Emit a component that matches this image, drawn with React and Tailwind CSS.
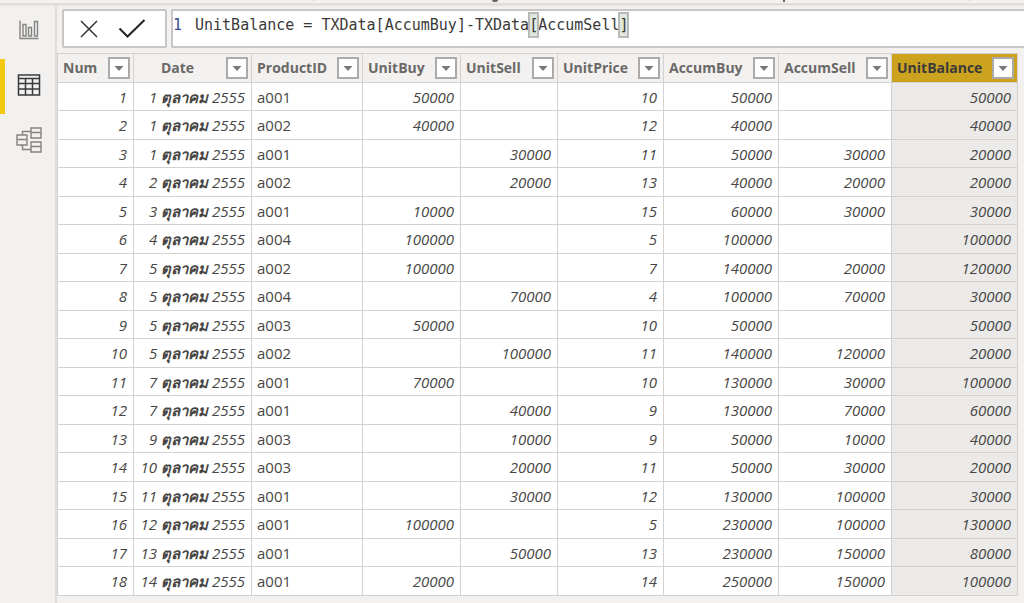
const columns = [
  { name: 'Num', width: 'w-[76px]', align: 'right' },
  { name: 'Date', width: 'w-[118px]', align: 'right', center: true },
  { name: 'ProductID', width: 'w-[111px]', align: 'left' },
  { name: 'UnitBuy', width: 'w-[98px]', align: 'right' },
  { name: 'UnitSell', width: 'w-[97px]', align: 'right' },
  { name: 'UnitPrice', width: 'w-[106px]', align: 'right' },
  { name: 'AccumBuy', width: 'w-[115px]', align: 'right' },
  { name: 'AccumSell', width: 'w-[113px]', align: 'right' },
  { name: 'UnitBalance', width: 'w-[126px]', align: 'right', selected: true },
];

const rows = [
  [1, '1 ตุลาคม 2555', 'a001', 50000, '', 10, 50000, '', 50000],
  [2, '1 ตุลาคม 2555', 'a002', 40000, '', 12, 40000, '', 40000],
  [3, '1 ตุลาคม 2555', 'a001', '', 30000, 11, 50000, 30000, 20000],
  [4, '2 ตุลาคม 2555', 'a002', '', 20000, 13, 40000, 20000, 20000],
  [5, '3 ตุลาคม 2555', 'a001', 10000, '', 15, 60000, 30000, 30000],
  [6, '4 ตุลาคม 2555', 'a004', 100000, '', 5, 100000, '', 100000],
  [7, '5 ตุลาคม 2555', 'a002', 100000, '', 7, 140000, 20000, 120000],
  [8, '5 ตุลาคม 2555', 'a004', '', 70000, 4, 100000, 70000, 30000],
  [9, '5 ตุลาคม 2555', 'a003', 50000, '', 10, 50000, '', 50000],
  [10, '5 ตุลาคม 2555', 'a002', '', 100000, 11, 140000, 120000, 20000],
  [11, '7 ตุลาคม 2555', 'a001', 70000, '', 10, 130000, 30000, 100000],
  [12, '7 ตุลาคม 2555', 'a001', '', 40000, 9, 130000, 70000, 60000],
  [13, '9 ตุลาคม 2555', 'a003', '', 10000, 9, 50000, 10000, 40000],
  [14, '10 ตุลาคม 2555', 'a003', '', 20000, 11, 50000, 30000, 20000],
  [15, '11 ตุลาคม 2555', 'a001', '', 30000, 12, 130000, 100000, 30000],
  [16, '12 ตุลาคม 2555', 'a001', 100000, '', 5, 230000, 100000, 130000],
  [17, '13 ตุลาคม 2555', 'a001', '', 50000, 13, 230000, 150000, 80000],
  [18, '14 ตุลาคม 2555', 'a001', 20000, '', 14, 250000, 150000, 100000],
];

function ReportIcon() {
  return (
    <svg width="20" height="20" viewBox="0 0 20 20" fill="none" stroke="#858381" strokeWidth="1.4">
      <path d="M1 0.5V18.500H19.500" />
      <path d="M4 4.500H7V16H4ZM9.500 7.500H12.500V16H9.500ZM15.500 1.500H18.500V16H15.500Z" />
    </svg>
  );
}

function DataIcon() {
  return (
    <svg width="24" height="22" viewBox="0 0 24 22" fill="none" stroke="#3b3a39" strokeWidth="1.5">
      <path d="M1.500 1H22.500V21H1.500ZM1.500 4.500H22.500M1.500 9.500H22.500M1.500 15H22.500M8.500 4.500V21M15.500 4.500V21" />
    </svg>
  );
}

function ModelIcon() {
  return (
    <svg width="26" height="26" viewBox="0 0 26 26" fill="none" stroke="#858381" strokeWidth="1.4">
      <path d="M1 8H11V18H1ZM1 12.500H11M15 1H25V11H15ZM15 5.500H25M15 15H25V25H15ZM15 19.500H25" />
      <path d="M6.500 8V4.500H15M6.500 18V22.500H15" />
    </svg>
  );
}

function ViewButton({ label, active, children }) {
  return (
    <button
      aria-label={label}
      className={`flex h-[55px] w-full items-center justify-center border-l-[5px] pr-[3px] pb-[3px] ${
        active ? 'border-[#f2c811]' : 'border-transparent'
      }`}
    >
      {children}
    </button>
  );
}

function HeaderCell({ column }) {
  return (
    <th
      scope="col"
      className={`border border-[#d4d2d0] p-0 pr-[3px] pl-[5px] font-bold ${
        column.selected ? 'bg-[#cba31f] text-[#3b3a39]' : 'text-[#6b6967]'
      }`}
    >
      <div className="flex items-center justify-between">
        <span className={column.center ? 'flex-1 pr-2.5 text-center' : ''}>{column.name}</span>
        <button
          aria-label={`Filter ${column.name}`}
          className="flex size-[22px] shrink-0 items-center justify-center border-2 border-[#adabaa] bg-white"
        >
          <svg width="10" height="5" viewBox="0 0 10 5" fill="#7a7876">
            <path d="M0.500 0H9.500L5 5Z" />
          </svg>
        </button>
      </div>
    </th>
  );
}

function DateText({ value }) {
  const [day, month, year] = value.split(' ');
  return (
    <>
      {day} <span className="font-semibold">{month}</span> {year}
    </>
  );
}

export default function App() {
  return (
    <div className="min-h-screen bg-[#f2f1f0] font-['Open_Sans','Noto_Sans',sans-serif]">
      {/* bottom edge of the ribbon */}
      <div className="shadow-sm">
        <div aria-hidden className="flex h-1 items-start border-b border-[#e2e0df]">
          <span className="ml-[313px] h-px w-px bg-[#c8c6c4]" />
          <span className="ml-[178px] h-[2px] w-[6px] rounded-b-full bg-[#6b6967]" />
          <span className="ml-[285px] h-[2px] w-[2px] bg-[#6b6967]" />
          <span className="mr-[54px] ml-auto h-px w-px bg-[#c8c6c4]" />
        </div>
      </div>

      <div className="flex min-h-[599px]">
        <nav className="w-[57px] shrink-0 border-r-2 border-[#e0dedd]">
          <ViewButton label="Report">
            <ReportIcon />
          </ViewButton>
          <ViewButton label="Data" active>
            <DataIcon />
          </ViewButton>
          <ViewButton label="Model">
            <ModelIcon />
          </ViewButton>
        </nav>

        <main className="min-w-0 flex-1">
          <div className="flex gap-1 pt-[5px] pl-[5px]">
            <div className="flex h-[39px] w-[105px] shrink-0 items-center justify-center gap-5 rounded-xs border-2 border-[#c8c6c4] bg-white pr-1">
              <button aria-label="Cancel">
                <svg width="18" height="18" viewBox="0 0 18 18" fill="none" stroke="#323130" strokeWidth="1.5">
                  <path d="M1 1L17 17M17 1L1 17" />
                </svg>
              </button>
              <button aria-label="Commit">
                <svg width="28" height="20" viewBox="0 0 28 20" fill="none" stroke="#252423" strokeWidth="2">
                  <path d="M1.500 9.500L9.500 17.500L26.500 1" />
                </svg>
              </button>
            </div>
            <div className="flex h-[39px] min-w-0 flex-1 items-start rounded-l-xs border-2 border-r-0 border-[#c8c6c4] bg-white pt-[2px] font-['DejaVu_Sans_Mono',monospace] text-[15px] leading-6 whitespace-pre text-[#3b3a39]">
              <span className="w-[22px] text-[#3b4a94]">1</span>
              <code className="font-['DejaVu_Sans_Mono',monospace]">
                UnitBalance = TXData[AccumBuy]-TXData
                <span className="bg-[#dfe8dc] py-[3px] outline-2 -outline-offset-1 outline-[#b9b9b9]">[</span>
                AccumSell
                <span className="bg-[#dfe8dc] py-[3px] outline-2 -outline-offset-1 outline-[#b9b9b9]">]</span>
              </code>
            </div>
          </div>

          <div className="pt-[5px] pr-[7px]">
            <table className="w-full table-fixed border-collapse text-[15px] leading-5 text-[#484644]">
              <colgroup>
                {columns.map((column) => (
                  <col key={column.name} className={column.width} />
                ))}
              </colgroup>
              <thead>
                <tr className="h-[29px] text-left text-[14px]">
                  {columns.map((column) => (
                    <HeaderCell key={column.name} column={column} />
                  ))}
                </tr>
              </thead>
              <tbody>
                {rows.map((row) => (
                  <tr key={row[0]} className="h-[28px] even:h-[29px]">
                    {row.map((value, i) => (
                      <td
                        key={columns[i].name}
                        className={`border border-[#d4d2d0] py-0 pr-[6px] pl-[5px] whitespace-nowrap ${
                          columns[i].align === 'left' ? 'text-left' : 'text-right italic'
                        } ${columns[i].selected ? 'bg-[#ebeae9]' : 'bg-white'}`}
                      >
                        {columns[i].name === 'Date' ? <DateText value={value} /> : value}
                      </td>
                    ))}
                  </tr>
                ))}
              </tbody>
            </table>
          </div>
        </main>
      </div>
    </div>
  );
}
